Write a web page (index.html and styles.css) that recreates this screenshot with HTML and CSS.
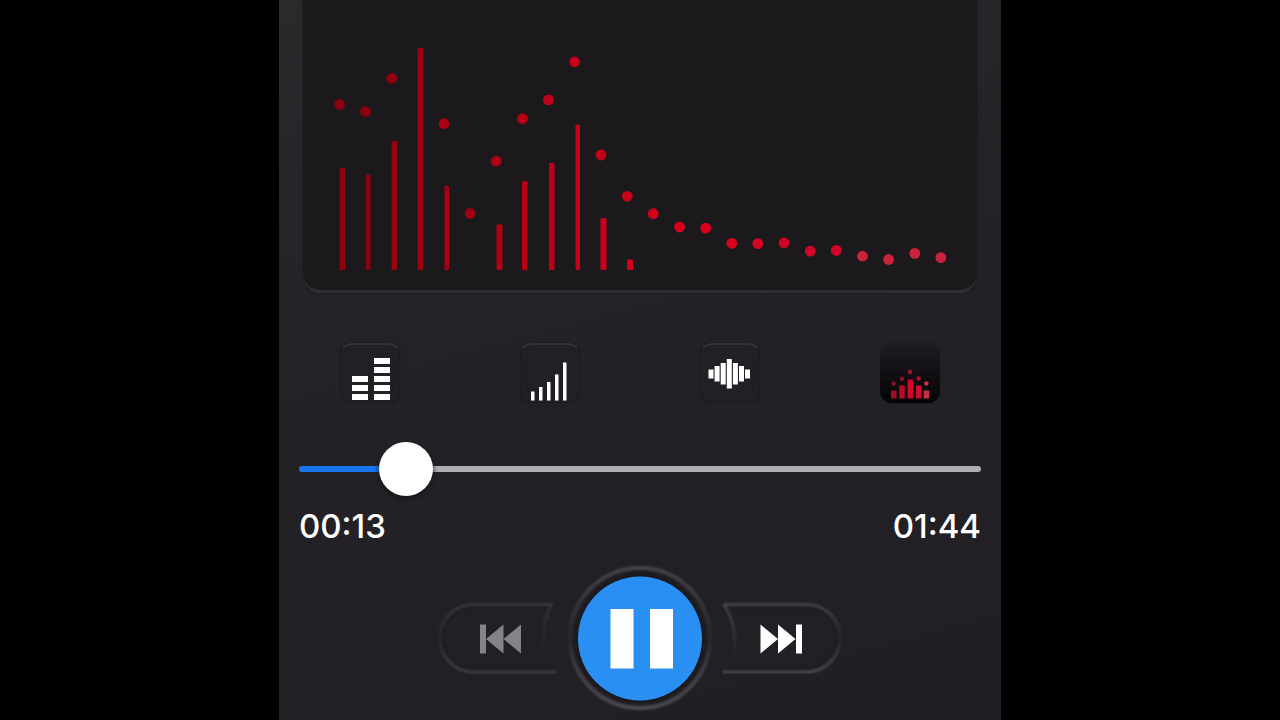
FILE: index.html
```html
<!DOCTYPE html>
<html lang="en">
<head>
<meta charset="utf-8">
<meta name="viewport" content="width=device-width, initial-scale=1">
<title>Audio player</title>
<link rel="stylesheet" href="styles.css">
</head>
<body>
<main class="player">
  <section class="visualizer" aria-label="Spectrum">
    <svg class="spectrum" viewBox="303 0 674 290" aria-hidden="true">
      <g>
        <rect x="339.500" y="168" width="5.500" height="102" rx="1" fill="#91000f"/>
        <rect x="366" y="174.500" width="4.500" height="95.500" rx="1" fill="#8c0310"/>
        <rect x="391.500" y="141" width="5.500" height="129" rx="1" fill="#9b0010"/>
        <rect x="417.500" y="48" width="6" height="222" rx="1" fill="#9d0012"/>
        <rect x="444.500" y="186" width="4.500" height="84" rx="1" fill="#a50014"/>
        <rect x="496.500" y="224.500" width="6" height="45.500" rx="1" fill="#b20014"/>
        <rect x="522" y="181" width="5.500" height="89" rx="1" fill="#b80014"/>
        <rect x="549" y="163" width="5.500" height="107" rx="1" fill="#be0016"/>
        <rect x="575.500" y="124.500" width="4.500" height="145.500" rx="1" fill="#c60018"/>
        <rect x="600.500" y="218" width="6" height="52" rx="1" fill="#c80018"/>
        <rect x="627" y="259.500" width="6" height="10.500" rx="1" fill="#d2001a"/>
      </g>
      <g>
        <circle cx="339.500" cy="104.500" r="5.400" fill="#8b0010"/>
        <circle cx="365.500" cy="111.500" r="5.400" fill="#8b0010"/>
        <circle cx="391.800" cy="78.300" r="5.400" fill="#940010"/>
        <circle cx="444" cy="123.700" r="5.400" fill="#a90014"/>
        <circle cx="470.200" cy="213.500" r="5.400" fill="#9f0012"/>
        <circle cx="496.300" cy="161.200" r="5.400" fill="#ad0014"/>
        <circle cx="522.500" cy="118.700" r="5.400" fill="#b50016"/>
        <circle cx="548.500" cy="99.900" r="5.400" fill="#c00018"/>
        <circle cx="574.700" cy="61.800" r="5.400" fill="#c40018"/>
        <circle cx="601" cy="155" r="5.400" fill="#c40018"/>
        <circle cx="627.300" cy="196.300" r="5.400" fill="#c8001a"/>
        <circle cx="653.300" cy="213.700" r="5.400" fill="#d4001a"/>
        <circle cx="679.500" cy="227" r="5.400" fill="#da001b"/>
        <circle cx="705.700" cy="228.200" r="5.400" fill="#da001b"/>
        <circle cx="731.800" cy="243.300" r="5.400" fill="#da001e"/>
        <circle cx="757.800" cy="243.600" r="5.400" fill="#d50624"/>
        <circle cx="784" cy="242.800" r="5.400" fill="#d00526"/>
        <circle cx="810.300" cy="251.200" r="5.400" fill="#d10528"/>
        <circle cx="836.300" cy="250.400" r="5.400" fill="#d10529"/>
        <circle cx="862.500" cy="256.200" r="5.400" fill="#ca213d"/>
        <circle cx="888.600" cy="259.500" r="5.400" fill="#ca213d"/>
        <circle cx="914.800" cy="253.400" r="5.400" fill="#ca213d"/>
        <circle cx="940.900" cy="257.600" r="5.400" fill="#ca213d"/>
      </g>
    </svg>
  </section>

  <nav class="styles" aria-label="Visualizer style">
    <button class="tile" type="button" aria-label="Blocks">
      <svg viewBox="0 0 60 60" fill="#fff"><path d="M12 32h16v6H12zM12 41h16v6H12zM12 50h16v6H12zM34 14h16v6H34zM34 23h16v6H34zM34 32h16v6H34zM34 41h16v6H34zM34 50h16v6H34z"/></svg>
    </button>
    <button class="tile" type="button" aria-label="Bars">
      <svg viewBox="0 0 60 60" fill="#fff"><path d="M11 47.500h3.500v9H11zM19 43h3.500v13.500H19zM27 38h3.500v18.500H27zM35 30.500h3.500v26H35zM43 18.500h3.500v38H43z"/></svg>
    </button>
    <button class="tile" type="button" aria-label="Waveform">
      <svg viewBox="0 0 60 60" fill="#fff"><path d="M8.500 25.500h5v9h-5zM14.600 22h5v15.500h-5zM20.700 19h5v21.500h-5zM26.800 15h5v29.500h-5zM32.900 19h5v21.500h-5zM39 22h5v15.500h-5zM45 25.500h5v9h-5z"/></svg>
    </button>
    <button class="tile tile-active" type="button" aria-label="Bars with peaks" aria-pressed="true">
      <svg viewBox="0 0 60 60">
        <g fill="#a40f25"><path d="M11 46.500h5.500v8H11z"/><circle cx="13.700" cy="39.500" r="2.300" fill="#861224"/></g>
        <g fill="#b60c27"><path d="M19.300 41.500h5.500v13h-5.500z"/><circle cx="22" cy="35" r="2.300" fill="#861224"/></g>
        <g fill="#d30929"><path d="M27.600 35.500h5.500v19h-5.500z"/><circle cx="30" cy="28" r="2.400" fill="#971126"/></g>
        <g fill="#d20a2b"><path d="M36 41.500h5.500v13H36z"/><circle cx="38.700" cy="34.500" r="2.300" fill="#a21228"/></g>
        <g fill="#c92e45"><path d="M43.700 46.500h5.500v8h-5.500z"/><circle cx="46.300" cy="39.500" r="2.300"/></g>
      </svg>
    </button>
  </nav>

  <section class="progress">
    <input class="seek" type="range" min="0" max="104" step="0.250" value="13.250" aria-label="Playback position">
    <div class="times"><time>00:13</time><time>01:44</time></div>
  </section>

  <section class="controls" aria-label="Playback">
    <button class="skip" type="button" aria-label="Previous track" disabled>
      <svg viewBox="0 0 120 72">
        <defs>
          <linearGradient id="edge-left" gradientUnits="userSpaceOnUse" x1="0" y1="0" x2="0" y2="72"><stop offset="0" stop-color="#3b393e"/><stop offset=".5" stop-color="#29272c"/><stop offset="1" stop-color="#403e44"/></linearGradient>
          <linearGradient id="fade-left" gradientUnits="userSpaceOnUse" x1="0" y1="2" x2="0" y2="52"><stop offset="0" stop-color="#353338"/><stop offset="1" stop-color="#222025"/></linearGradient>
        </defs>
        <g class="relief">
          <path d="M111 5H36C18 5 4 19 4 36s14 31 32 31h78" fill="none" stroke="#1e1c21" stroke-width="3"/>
          <path d="M115 2.500H36C17 2.500 2 17 2 36s15 34 34 34h82" fill="none" stroke="url(#edge-left)" stroke-width="3"/>
          <path d="M113 3Q102 25 107 52" fill="none" stroke="url(#fade-left)" stroke-width="3"/>
        </g>
        <path fill="#858388" d="M42 22.500h6v29h-6zM65.500 22.500v29L48 37zM83 22.500v29L65.500 37z"/>
      </svg>
    </button>
    <button class="play" type="button" aria-label="Pause">
      <svg viewBox="0 0 146 146">
        <defs>
          <linearGradient id="ring" x1="0" y1="0" x2="0" y2="1"><stop offset="0" stop-color="#464449"/><stop offset=".25" stop-color="#37353a"/><stop offset=".5" stop-color="#29272c"/><stop offset=".75" stop-color="#424046"/><stop offset="1" stop-color="#4b494f"/></linearGradient>
        </defs>
        <g class="relief">
          <circle cx="73" cy="73" r="70" fill="#1f1d22" stroke="url(#ring)" stroke-width="4"/>
          <circle cx="73" cy="73" r="64" fill="#1b191e"/>
        </g>
        <circle cx="73" cy="73.500" r="62" fill="#2a8ff2"/>
        <path fill="#fff" d="M43.500 44h23v59.500h-23zM83 44h23v59.500H83z"/>
      </svg>
    </button>
    <button class="skip" type="button" aria-label="Next track">
      <svg viewBox="0 0 120 72">
        <defs>
          <linearGradient id="edge-right" gradientUnits="userSpaceOnUse" x1="0" y1="0" x2="0" y2="72"><stop offset="0" stop-color="#48464c"/><stop offset=".5" stop-color="#29272c"/><stop offset="1" stop-color="#4e4c52"/></linearGradient>
          <linearGradient id="fade-right" gradientUnits="userSpaceOnUse" x1="0" y1="2" x2="0" y2="58"><stop offset="0" stop-color="#454349"/><stop offset="1" stop-color="#222025"/></linearGradient>
        </defs>
        <g class="relief">
          <path d="M6 5h78c18 0 32 14 32 31S102 67 84 67H6" fill="none" stroke="#1e1c21" stroke-width="3"/>
          <path d="M1 2.500h83c19 0 34 14.500 34 33.500S103 70 84 70H1" fill="none" stroke="url(#edge-right)" stroke-width="3"/>
          <path d="M2 3Q17 25 11 58" fill="none" stroke="url(#fade-right)" stroke-width="3"/>
        </g>
        <path fill="#fff" d="M38.500 22.500v29L56 37zM56 22.500v29L73.500 37zM74 22.500h6v29h-6z"/>
      </svg>
    </button>
  </section>
</main>
</body>
</html>
```
FILE: styles.css
```css
* { box-sizing: border-box; }

body {
  margin: 0;
  background: #000;
  color: #fff;
  font-family: Inter, "Liberation Sans", sans-serif;
}

button {
  padding: 0;
  border: 0;
  background: none;
  color: inherit;
}

svg { display: block; width: 100%; }

.player {
  width: 100%;
  max-width: 722px;
  min-height: 100vh;
  margin: 0 auto;
  overflow: hidden;
  background: linear-gradient(165deg, #2b292c 0%, #242226 40%, #211f24 100%);
}

.visualizer {
  margin: 0 24px;
  border-bottom: 3px solid #302e33;
  border-radius: 0 0 18px 18px;
  background: #1b191b;
  box-shadow: 0 0 3px #1f1d20;
}

.styles {
  display: grid;
  grid-template-columns: repeat(4, 1fr);
  justify-items: center;
  margin-top: 50px;
  padding: 0 1px;
}

.tile {
  width: 60px;
  height: 60px;
  border: 1px solid #1e1c20;
  border-top: 2px solid #343237;
  border-radius: 12px;
  background: #222025;
  box-shadow: 0 0 2px #1d1b1f;
}

.tile svg { margin: -1px -1px 0; width: 60px; }

.tile-active {
  border-color: transparent;
  background: linear-gradient(#1e1c21, #040305) border-box;
}

.progress { padding: 0 20px; }

.seek {
  appearance: none;
  display: block;
  width: 100%;
  height: 54px;
  margin: 39px 0 0;
  background: none;
}

.seek::-webkit-slider-runnable-track {
  height: 6px;
  border-radius: 3px;
  background: linear-gradient(to right, #1974ef 16%, #afadb2 16%);
}

.seek::-webkit-slider-thumb {
  appearance: none;
  width: 54px;
  height: 54px;
  margin-top: -24px;
  border-radius: 50%;
  background: #fff;
  box-shadow: 0 2px 5px #151317;
}

.times {
  display: flex;
  justify-content: space-between;
  margin-top: 10px;
  font-size: 33px;
  font-weight: 500;
  line-height: 40px;
}

.controls {
  display: flex;
  justify-content: center;
  align-items: center;
  gap: 9px;
  margin-top: 19px;
}

.relief { filter: blur(1px); }

.skip { width: 120px; }
.play { width: 146px; }
```
